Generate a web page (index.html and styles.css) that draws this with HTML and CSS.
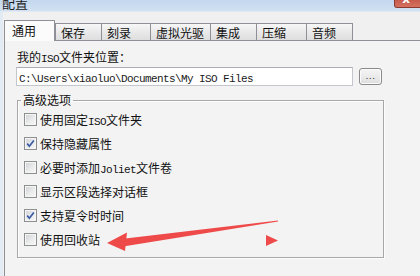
FILE: index.html
```html
<!DOCTYPE html>
<html>
<head>
<meta charset="utf-8">
<link rel="stylesheet" href="styles.css">
</head>
<body>
<div class="titlebar">
  <span class="title">配置</span>
  <span class="close"><span class="x">x</span></span>
</div>
<div class="client">
  <div class="tabs">
    <div class="tab sel">通用</div>
    <div class="tab t2">保存</div>
    <div class="tab t3">刻录</div>
    <div class="tab t4">虚拟光驱</div>
    <div class="tab t5">集成</div>
    <div class="tab t6">压缩</div>
    <div class="tab t7">音频</div>
  </div>
  <div class="panel">
    <div class="label">我的<span class="lat">ISO</span>文件夹位置：</div>
    <div class="pathrow">
      <div class="input"><span class="lat">C:\Users\xiaoluo\Documents\My ISO Files</span></div>
      <div class="btn">...</div>
    </div>
    <fieldset class="group">
      <legend>高级选项</legend>
      <div class="row"><span class="cb"></span><span>使用固定<span class="lat">ISO</span>文件夹</span></div>
      <div class="row"><span class="cb"><svg viewBox="0 0 11 11" width="11" height="11"><path d="M2.2 5.6 L4.4 8.2 L8.8 2.4" fill="none" stroke="#3a5aa6" stroke-width="1.7"/></svg></span><span>保持隐藏属性</span></div>
      <div class="row"><span class="cb"></span><span>必要时添加<span class="lat">Joliet</span>文件卷</span></div>
      <div class="row"><span class="cb"></span><span>显示区段选择对话框</span></div>
      <div class="row"><span class="cb"><svg viewBox="0 0 11 11" width="11" height="11"><path d="M2.2 5.6 L4.4 8.2 L8.8 2.4" fill="none" stroke="#3a5aa6" stroke-width="1.7"/></svg></span><span>支持夏令时时间</span></div>
      <div class="row"><span class="cb"></span><span>使用回收站</span></div>
    </fieldset>
  </div>
</div>
<svg class="arrow" viewBox="0 0 420 276" width="420" height="276">
  <polygon points="121,239 278,220.6 278,221.6 123,246.5" fill="#ef4a4a"/>
  <polygon points="107,243 127,232.5 125,251" fill="#ef4a4a"/>
  <polygon points="266,235 266,246 278,240.5" fill="#ef4a4a"/>
</svg>
</body>
</html>
```
FILE: styles.css
```css
html, body {
  margin: 0;
  padding: 0;
}
body {
  width: 420px;
  height: 276px;
  overflow: hidden;
  background: #f0f0f0;
  font-family: "Noto Sans CJK SC", "Noto Sans", sans-serif;
  font-size: 12px;
  color: #111;
  position: relative;
}
.lat {
  font-family: "Liberation Mono", monospace;
  font-size: 11px;
  letter-spacing: -0.6px;
}
.titlebar {
  height: 12px;
  display: flex;
  justify-content: space-between;
  align-items: flex-start;
  background: linear-gradient(#c3d7ee, #d2e1f2);
  overflow: hidden;
  border-bottom: 1px solid #dfe8f3;
  box-sizing: border-box;
}
.title {
  font-size: 13px;
  line-height: 13px;
  margin-top: -4px;
  padding-left: 2px;
  color: #1c1c1c;
}
.close {
  width: 30px;
  height: 8px;
  margin-right: -4px;
  background: linear-gradient(#c65a4c, #d5725f);
  border: 1px solid #8a3a30;
  border-top: none;
  border-radius: 0 0 3px 3px;
  box-sizing: border-box;
  display: flex;
  justify-content: center;
  overflow: hidden;
}
.close .x {
  color: #fff;
  font-family: "DejaVu Sans", sans-serif;
  font-weight: bold;
  font-size: 12px;
  line-height: 8px;
  margin-top: -5px;
  margin-left: -6px;
}
.client {
  border-left: 3px solid #e2eaf4;
  padding-left: 1px;
  padding-top: 8px;
}
.tabs {
  display: flex;
  align-items: flex-end;
  height: 21px;
  margin-bottom: -1px;
}
.tab {
  box-sizing: border-box;
  height: 17px;
  margin-bottom: 1px;
  border: 1px solid #8e9096;
  border-bottom: none;
  border-right: none;
  background: linear-gradient(#f7f7f7, #e9e9e9 50%, #dedede);
  line-height: 17px;
  padding-left: 5px;
  white-space: nowrap;
}
.tab.sel {
  width: 51px;
  height: 21px;
  margin-bottom: 0;
  border-right: 1px solid #8e9096;
  background: #fbfbfb;
  padding-left: 7px;
  line-height: 20px;
  position: relative;
  z-index: 1;
}
.t2 { width: 46px; }
.t3 { width: 49px; }
.t4 { width: 60px; }
.t5 { width: 46px; }
.t6 { width: 50px; }
.t7 { width: 47px; border-right: 1px solid #8e9096; }
.panel {
  border: 1px solid #8e9096;
  border-right: none;
  background: #f3f3f3;
  height: 260px;
  width: 440px;
  box-sizing: border-box;
  padding: 8px 0 0 11px;
}
.label {
  margin-left: 1px;
  line-height: 15px;
  height: 15px;
}
.pathrow {
  display: flex;
  align-items: center;
  margin-top: 3px;
  gap: 6px;
}
.input {
  box-sizing: border-box;
  width: 337px;
  height: 19px;
  background: #fff;
  border: 1px solid #c3c6cc;
  border-top-color: #abadb3;
  padding-left: 2px;
  line-height: 17px;
  color: #1a1a1a;
}
.btn {
  box-sizing: border-box;
  width: 23px;
  height: 17px;
  border: 1px solid #8a8a8a;
  border-radius: 3px;
  background: linear-gradient(#f4f4f4, #ebebeb 50%, #dddddd);
  box-shadow: inset 0 0 0 1px #fbfbfb;
  font-family: "DejaVu Sans", sans-serif;
  font-size: 9px;
  line-height: 15px;
  text-align: center;
  color: #333;
  letter-spacing: 0.5px;
}
.group {
  box-sizing: border-box;
  width: 367px;
  margin: 7px 0 0 1px;
  padding: 0 0 6px 3px;
  border: 1px solid #a8a8a8;
  box-shadow: inset 1px 1px 0 #fdfdfd, 1px 1px 0 #fdfdfd;
  min-width: 0;
}
.group legend {
  padding: 0 2px;
  line-height: 14px;
  height: 14px;
}
.row {
  height: 24px;
  display: flex;
  align-items: center;
  gap: 3px;
  margin-left: 3px;
}
.cb {
  box-sizing: border-box;
  width: 13px;
  height: 13px;
  border: 1px solid #8e8f8f;
  background: linear-gradient(135deg, #cdd0d5, #eceded 60%, #f7f7f7);
  box-shadow: inset 0 0 0 1px #f6f6f6;
  display: flex;
  align-items: center;
  justify-content: center;
}
.cb svg {
  display: block;
}
.arrow {
  position: absolute;
  left: 0;
  top: 0;
  pointer-events: none;
}
```
